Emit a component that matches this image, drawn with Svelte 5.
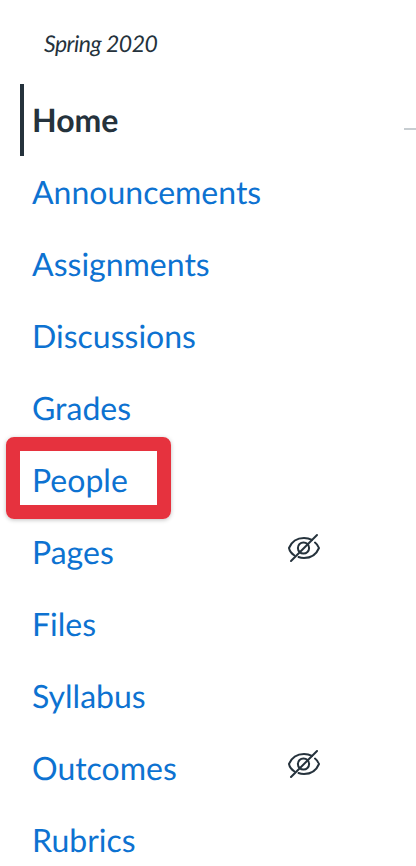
<script lang="ts">
  type Item = { label: string; hidden?: boolean; active?: boolean };

  const items: Item[] = [
    { label: 'Home', active: true },
    { label: 'Announcements' },
    { label: 'Assignments' },
    { label: 'Discussions' },
    { label: 'Grades' },
    { label: 'People' },
    { label: 'Pages', hidden: true },
    { label: 'Files' },
    { label: 'Syllabus' },
    { label: 'Outcomes', hidden: true },
    { label: 'Rubrics' }
  ];
</script>

<div class="page">
  <div class="term">Spring 2020</div>
  <nav class="menu">
    {#each items as item}
      <div class="row" class:active={item.active}>
        <a href="#top" class="link">{item.label}</a>
        {#if item.hidden}
          <svg class="eye" viewBox="0 0 32 32" width="32" height="32" fill="none" stroke="#25323c" stroke-width="2" stroke-linecap="round" stroke-linejoin="round">
            <path d="M6.5 23.5C3.5 21.5 1.5 18.5 1 16 3.5 10 9 6 16 6c3 0 5.5.6 8 1.8" />
            <path d="M27 10.5c2 1.5 3.3 3.5 4 5.5-2.500 6-8 10-15 10-2 0-4-.4-5.500-1" />
            <circle cx="15.500" cy="16" r="5.600" />
            <path d="M3 29 29 3" />
          </svg>
        {/if}
        {#if item.active}
          <span class="rule"></span>
        {/if}
      </div>
    {/each}
    <div class="callout"></div>
  </nav>
</div>

<style>
:global(body) {
  margin: 0;
  background: #fff;
}
.page {
  height: 866px;
  overflow: hidden;
  font-family: Lato, "Noto Sans", sans-serif;
  text-rendering: geometricPrecision;
  box-sizing: border-box;
}
.term {
  height: 84px;
  padding: 29px 0 0 44px;
  box-sizing: border-box;
  font-style: italic;
  font-size: 23px;
  letter-spacing: -0.5px;
  line-height: 28px;
  color: #25323c;
}
.menu {
  position: relative;
  padding-left: 20px;
}
.row {
  height: 72px;
  display: flex;
  align-items: center;
  padding-left: 12px;
  position: relative;
}
.row.active {
  padding-left: 8px;
  border-left: 4px solid #25323c;
}
.link {
  font-size: 32px;
  line-height: 40px;
  color: #0d72d1;
  text-decoration: none;
}
.active .link {
  color: #25323c;
  font-weight: 700;
}
.eye {
  margin-left: auto;
  margin-right: 96px;
  margin-top: -8px;
}
.rule {
  position: absolute;
  right: 0;
  left: 380px;
  top: 44px;
  height: 2px;
  background: #c7cdd1;
}
.callout {
  position: absolute;
  left: 6px;
  top: 353px;
  width: 137px;
  height: 54px;
  border: 14px solid #e6323e;
  border-radius: 8px;
  box-shadow: 0 1px 4px rgba(0, 0, 0, 0.25);
}
</style>
